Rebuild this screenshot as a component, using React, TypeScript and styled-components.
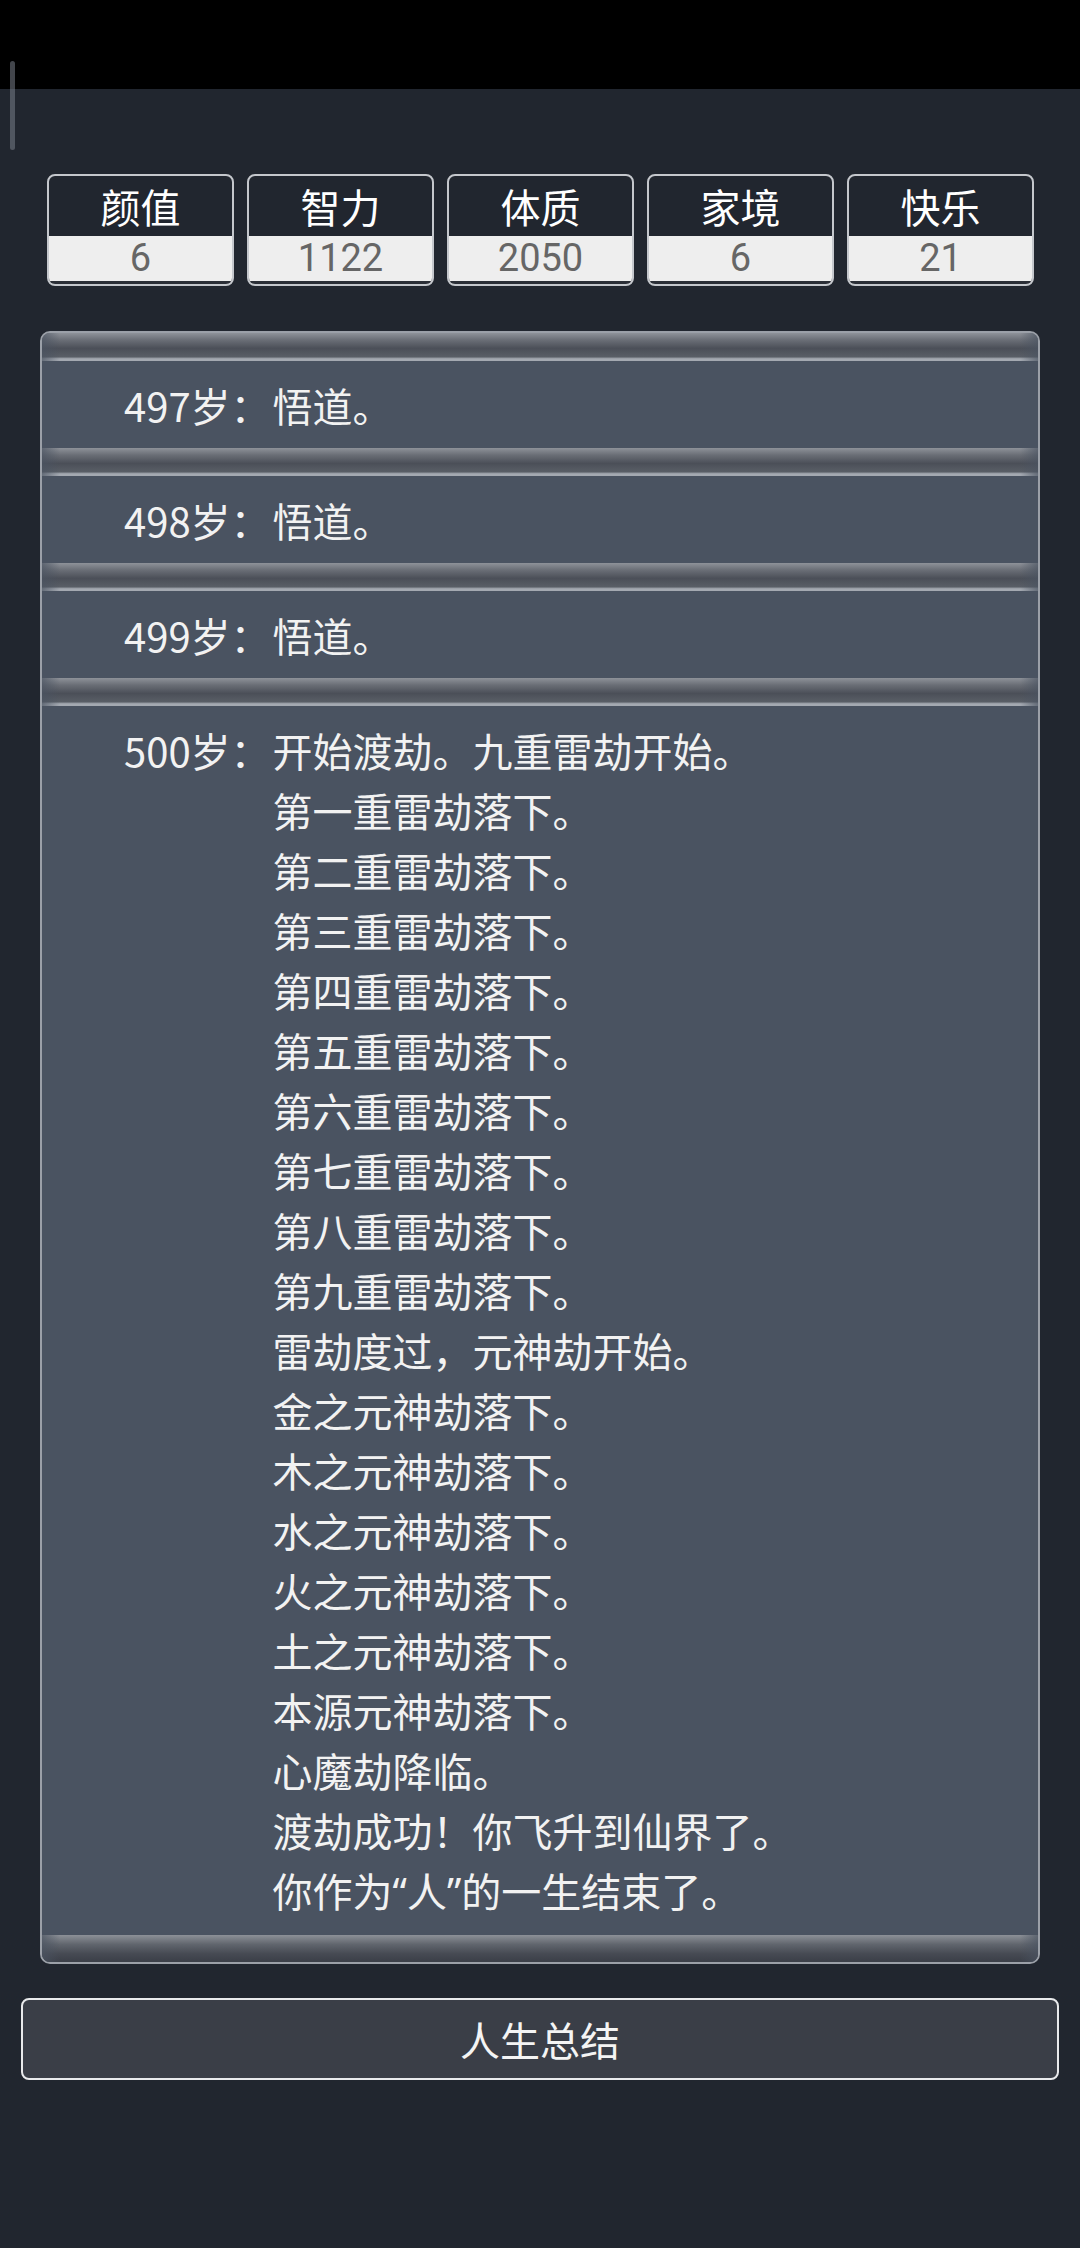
import * as React from 'react'
import styled, { createGlobalStyle } from 'styled-components'

const stats = [
  { label: '颜值', value: 6 },
  { label: '智力', value: 1122 },
  { label: '体质', value: 2050 },
  { label: '家境', value: 6 },
  { label: '快乐', value: 21 },
]

const log: { age: number; lines: string[] }[] = [
  { age: 497, lines: ['悟道。'] },
  { age: 498, lines: ['悟道。'] },
  { age: 499, lines: ['悟道。'] },
  {
    age: 500,
    lines: [
      '开始渡劫。九重雷劫开始。',
      '第一重雷劫落下。',
      '第二重雷劫落下。',
      '第三重雷劫落下。',
      '第四重雷劫落下。',
      '第五重雷劫落下。',
      '第六重雷劫落下。',
      '第七重雷劫落下。',
      '第八重雷劫落下。',
      '第九重雷劫落下。',
      '雷劫度过，元神劫开始。',
      '金之元神劫落下。',
      '木之元神劫落下。',
      '水之元神劫落下。',
      '火之元神劫落下。',
      '土之元神劫落下。',
      '本源元神劫落下。',
      '心魔劫降临。',
      '渡劫成功！你飞升到仙界了。',
      '你作为“人”的一生结束了。',
    ],
  },
]

// curly quotes render narrow on the device, so give them a latin font
function renderLine(line: string) {
  return line.split(/([“”])/).map((part, i) =>
    part === '“' || part === '”' ? <Quote key={i}>{part}</Quote> : part
  )
}

export default function App() {
  return (
    <>
      <GlobalStyle />
      <StatusBar />
      <ScrollThumb />
      <Page>
        <StatsRow>
          {stats.map((s) => (
            <StatBox key={s.label}>
              <StatLabel>{s.label}</StatLabel>
              <StatValue>{s.value}</StatValue>
            </StatBox>
          ))}
        </StatsRow>

        <Panel>
          <Groove />
          {log.map((entry, i) => (
            <React.Fragment key={entry.age}>
              <Entry>
                <Age>{entry.age}岁：</Age>
                <Lines>
                  {entry.lines.map((line, j) => (
                    <Line key={j}>{renderLine(line)}</Line>
                  ))}
                </Lines>
              </Entry>
              <Groove last={i === log.length - 1} />
            </React.Fragment>
          ))}
        </Panel>

        <SummaryButton type="button">人生总结</SummaryButton>
      </Page>
    </>
  )
}

////
// Styles
///

const GlobalStyle = createGlobalStyle`
  html, body {
    margin: 0;
    padding: 0;
    background: #21262f;
  }
  body {
    font-family: "Noto Sans CJK SC", "Noto Sans", sans-serif;
    color: #f2f2f2;
    min-height: 2248px;
  }
`

const StatusBar = styled.div`
  height: 89px;
  background: #000;
`

const ScrollThumb = styled.div`
  position: absolute;
  left: 10px;
  top: 61px;
  width: 5px;
  height: 89px;
  border-radius: 3px;
  background: rgba(120, 126, 136, 0.55);
`

const Page = styled.main`
  display: flex;
  flex-direction: column;
  padding: 85px 0 0;
`

const StatsRow = styled.div`
  display: grid;
  grid-template-columns: repeat(5, 1fr);
  gap: 13px;
  padding: 0 46px 0 47px;
`

const StatBox = styled.div`
  display: flex;
  flex-direction: column;
  border: 2px solid #c4c7cc;
  border-radius: 8px;
  overflow: hidden;
  background: #21262f;
`

const StatLabel = styled.div`
  height: 60px;
  line-height: 60px;
  text-align: center;
  font-size: 40px;
  color: #ffffff;
`

const StatValue = styled.div`
  height: 45px;
  line-height: 45px;
  text-align: center;
  font-family: Roboto, "Noto Sans", sans-serif;
  font-size: 38px;
  color: #666666;
  background: #eeeeee;
  border-bottom: 3px solid #2a2e36;
`

const Panel = styled.section`
  margin: 45px 40px 0;
  border: 2px solid #9ba0a8;
  border-radius: 10px;
  overflow: hidden;
  background: #4a5361;
`

const Groove = styled.div<{ last?: boolean }>`
  height: ${(p) => (p.last ? '27px' : '28px')};
  background:
    linear-gradient(
      to right,
      rgba(74, 83, 97, 0.7) 0,
      rgba(74, 83, 97, 0) 18px,
      rgba(74, 83, 97, 0) calc(100% - 18px),
      rgba(74, 83, 97, 0.7) 100%
    ),
    ${(p) =>
      p.last
        ? 'linear-gradient(to bottom, #8c9097 0%, #60656d 35%, #464a53 70%, #3b3f48 100%)'
        : 'linear-gradient(to bottom, #8e9299 0%, #6a6e76 25%, #4b4f58 55%, #595e66 85%, #a4a9b1 92%, #a4a9b1 100%)'};
`

const Entry = styled.div`
  display: flex;
  align-items: flex-start;
  padding: 14px 0 13px 82px;
  font-size: 40px;
  line-height: 60px;
  color: #f2f2f2;
`

const Age = styled.span`
  flex: none;
  margin-right: 2px;
  white-space: nowrap;
`

const Lines = styled.div`
  display: flex;
  flex-direction: column;
`

const Line = styled.div`
  white-space: nowrap;
`

const Quote = styled.span`
  font-family: "Noto Sans", sans-serif;
`

const SummaryButton = styled.button`
  margin: 34px 21px 0;
  height: 82px;
  border: 2px solid #e9eaec;
  border-radius: 8px;
  background: #3a3e47;
  color: #f4f4f4;
  font-family: "Noto Sans CJK SC", "Noto Sans", sans-serif;
  font-size: 40px;
  line-height: 1;
  cursor: pointer;
`
